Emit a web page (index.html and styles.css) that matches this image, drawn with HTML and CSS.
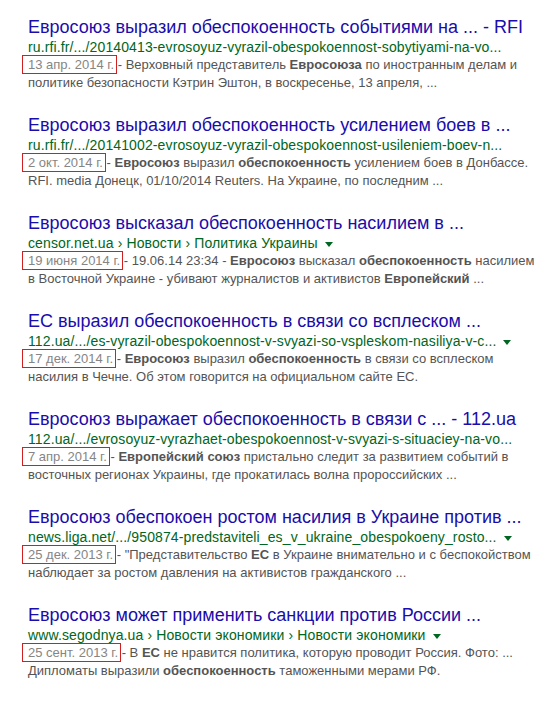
FILE: index.html
```html
<!DOCTYPE html>
<html lang="ru">
<head>
  <meta charset="UTF-8" />
  <title>Евросоюз обеспокоенность — поиск</title>
  <link rel="stylesheet" href="styles.css">
</head>
<body>
  <div class="results">
    <div class="result">
      <a class="title" href="#">Евросоюз выразил обеспокоенность событиями на ... - RFI</a>
      <div class="url">ru.rfi.fr/.../20140413-evrosoyuz-vyrazil-obespokoennost-sobytiyami-na-vo...</div>
      <div class="snippet"><span class="date">13 апр. 2014 г.</span> - Верховный представитель <b>Евросоюза</b> по иностранным делам и<br>политике безопасности Кэтрин Эштон, в воскресенье, 13 апреля, ...</div>
    </div>

    <div class="result">
      <a class="title" href="#">Евросоюз выразил обеспокоенность усилением боев в ...</a>
      <div class="url">ru.rfi.fr/.../20141002-evrosoyuz-vyrazil-obespokoennost-usileniem-boev-n...</div>
      <div class="snippet"><span class="date">2 окт. 2014 г.</span> - <b>Евросоюз</b> выразил <b>обеспокоенность</b> усилением боев в Донбассе.<br>RFI. media Донецк, 01/10/2014 Reuters. На Украине, по последним ...</div>
    </div>

    <div class="result">
      <a class="title" href="#">Евросоюз высказал обеспокоенность насилием в ...</a>
      <div class="url">censor.net.ua › Новости › Политика Украины<span class="arrow"></span></div>
      <div class="snippet"><span class="date">19 июня 2014 г.</span> - 19.06.14 23:34 - <b>Евросоюз</b> высказал <b>обеспокоенность</b> насилием<br>в Восточной Украине - убивают журналистов и активистов <b>Европейский</b> ...</div>
    </div>

    <div class="result">
      <a class="title" href="#">ЕС выразил обеспокоенность в связи со всплеском ...</a>
      <div class="url">112.ua/.../es-vyrazil-obespokoennost-v-svyazi-so-vspleskom-nasiliya-v-c...<span class="arrow"></span></div>
      <div class="snippet"><span class="date">17 дек. 2014 г.</span> - <b>Евросоюз</b> выразил <b>обеспокоенность</b> в связи со всплеском<br>насилия в Чечне. Об этом говорится на официальном сайте ЕС.</div>
    </div>

    <div class="result">
      <a class="title" href="#">Евросоюз выражает обеспокоенность в связи с ... - 112.ua</a>
      <div class="url">112.ua/.../evrosoyuz-vyrazhaet-obespokoennost-v-svyazi-s-situaciey-na-vo...</div>
      <div class="snippet"><span class="date">7 апр. 2014 г.</span> - <b>Европейский союз</b> пристально следит за развитием событий в<br>восточных регионах Украины, где прокатилась волна пророссийских ...</div>
    </div>

    <div class="result">
      <a class="title" href="#">Евросоюз обеспокоен ростом насилия в Украине против ...</a>
      <div class="url">news.liga.net/.../950874-predstaviteli_es_v_ukraine_obespokoeny_rosto...<span class="arrow"></span></div>
      <div class="snippet"><span class="date">25 дек. 2013 г.</span> - "Представительство <b>ЕС</b> в Украине внимательно и с беспокойством<br>наблюдает за ростом давления на активистов гражданского ...</div>
    </div>

    <div class="result">
      <a class="title" href="#">Евросоюз может применить санкции против России ...</a>
      <div class="url">www.segodnya.ua › Новости экономики › Новости экономики<span class="arrow"></span></div>
      <div class="snippet"><span class="date">25 сент. 2013 г.</span> - В <b>ЕС</b> не нравится политика, которую проводит Россия. Фото: ...<br>Дипломаты выразили <b>обеспокоенность</b> таможенными мерами РФ.</div>
    </div>
  </div>
</body>
</html>
```

FILE: styles.css
```css
body { margin: 0; background: #fff; font-family: Arial, "Liberation Sans", sans-serif; color: #545454; }
.results { padding: 16px 0 0 28px; }
.result { margin-bottom: 22px; }
.title { display: block; font-size: 18px; line-height: 22px; color: #1a0dab; text-decoration: none; white-space: nowrap; }
.url { font-size: 14px; line-height: 18px; color: #006621; white-space: nowrap; letter-spacing: 0.12px; }
.arrow {
  display: inline-block;
  margin-left: 7px;
  vertical-align: middle;
  border-left: 4px solid transparent;
  border-right: 4px solid transparent;
  border-top: 5px solid #006621;
}
.snippet { font-size: 13px; line-height: 18px; white-space: nowrap; }
.snippet b { color: #545454; }
.date {
  color: #858585;
  border: 1px solid #d02020;
  padding: 1px 2px 1px 5px;
  margin-left: -6px;
  margin-right: -3px;
}
```
